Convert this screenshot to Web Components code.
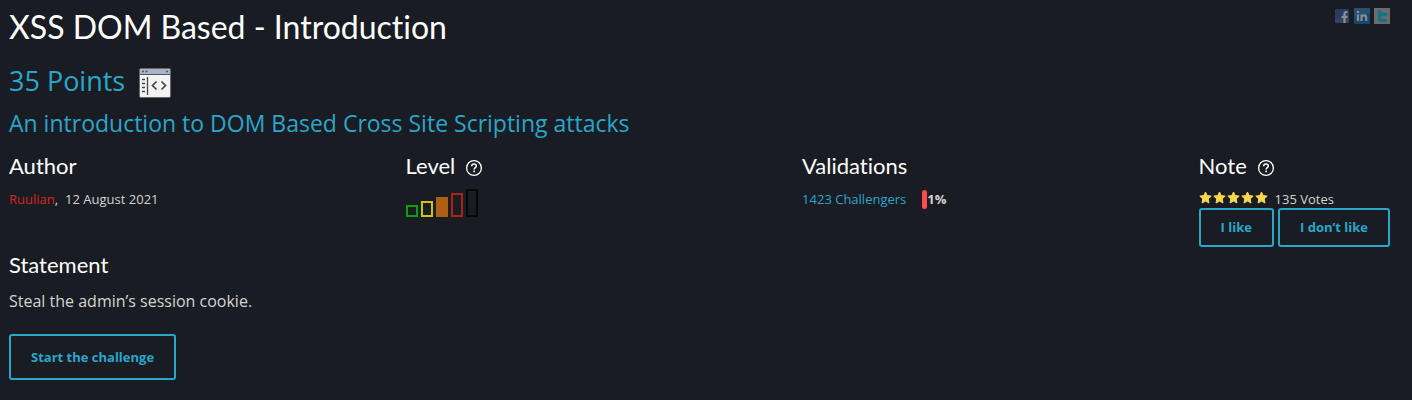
<!DOCTYPE html>
<html lang="en">
<head>
<meta charset="utf-8">
<title>XSS DOM Based - Introduction</title>
<style>
  body { margin: 0; background: #1a1c23; color: #d4d4d4; font-family: "Open Sans", "Noto Sans", sans-serif; font-size: 13px; line-height: 20px; }
</style>
</head>
<body>
<challenge-page></challenge-page>
<script>
const define = (name, html, setup) => customElements.define(name, class extends HTMLElement {
  constructor() {
    super();
    const t = document.createElement('template');
    t.innerHTML = html;
    this.attachShadow({ mode: 'open' }).append(t.content.cloneNode(true));
  }
  connectedCallback() { if (setup) setup(this); }
});

define('help-mark', `
<style>:host { display: inline-flex; padding-bottom: 3px; } svg { display: block; }</style>
<svg width="18" height="18" viewBox="0 0 18 18" fill="none" stroke="#fff" role="img" aria-label="Help">
  <circle cx="9" cy="9" r="7.4" stroke-width="1.3"/>
  <path d="M6.7 7.2C6.7 5.8 7.7 5 9 5s2.300.8 2.300 2c0 1.600-2.200 1.700-2.200 3.400" stroke-width="1.500"/>
  <path d="M9.100 11.500v1.700" stroke-width="1.600"/>
</svg>`);

define('code-window', `
<style>:host { display: inline-flex; } svg { display: block; }</style>
<svg width="32" height="30" viewBox="0 0 32 30" role="img" aria-label="Web - Client">
  <rect x=".5" y=".5" width="31" height="29" rx="1.500" fill="#f3f3f3" stroke="#656873"/>
  <path d="M1 1h30v5H1z" fill="#a9b4c8"/>
  <path d="M1 6.500h30" stroke="#535663"/>
  <path d="M3 3.500h2M6.500 3.500h2M27 3.500h2" stroke="#535663" stroke-width="1.400"/>
  <path d="M8.500 9v18" stroke="#454752" stroke-width="1.300"/>
  <path d="M3 11.500h3M3 15.500h3M3 19.500h3M3 23.500h3" stroke="#454752" stroke-width="1.300"/>
  <path d="M17.500 13.500l-4 4 4 4M22.500 13.500l4 4-4 4" fill="none" stroke="#454752" stroke-width="1.700"/>
</svg>`);

define('share-links', `
<style>
  :host { display: flex; gap: 4px; opacity: .5; }
  a { display: block; } svg { display: block; }
</style>
<a href="#facebook" aria-label="Facebook"><svg width="16" height="16" viewBox="0 0 16 16"><rect x="1" y="1" width="14" height="14" fill="#3e5ba0"/><path d="M1 11h14v4H1z" fill="#52699f"/><path d="M13.500 4h-1Q10.500 4 10.500 6v9M7.500 8.800h6" fill="none" stroke="#fff" stroke-width="2.200"/></svg></a>
<a href="#linkedin" aria-label="LinkedIn"><svg width="16" height="16" viewBox="0 0 16 16"><rect width="16" height="16" rx="1" fill="#1672b8"/><path d="M0 0h16v5L0 9z" fill="#3586c2"/><path d="M4 6.500V13M4 3v2M7.500 6.500V13M7.500 9q0-1.700 2.300-1.700T12.200 9.500V13" fill="none" stroke="#f4f8fb" stroke-width="2.200"/></svg></a>
<a href="#twitter" aria-label="Twitter"><svg width="16" height="16" viewBox="0 0 16 16"><rect width="16" height="16" fill="#b9babd"/><path d="M5.500 3.500v6q0 3 3 3H11.500M5.500 6.500H11.500" fill="none" stroke="#10cbe0" stroke-width="3.400" stroke-linecap="round"/></svg></a>`);

define('level-bars', `
<style>
  :host { display: flex; align-items: flex-end; gap: 3px; height: 28px; }
  i { box-sizing: border-box; width: 12px; border: 2px solid; }
</style>
<i style="height:12px;color:#0ca10c"></i><i style="height:16px;color:#cac60b"></i><i style="height:20px;color:#ae5f13;background:#ae5f13"></i><i style="height:24px;color:#a92416"></i><i style="height:28px;color:#07080a"></i>`);

define('star-rating', `
<style>:host { display: inline-flex; } svg { display: block; }</style>`, el => {
  for (let n = 0; n < 5; n++) el.shadowRoot.innerHTML += '<svg width="14" height="14" viewBox="0 0 14 14" aria-hidden="true"><path d="M6.500 1l1.700 3.600 4 .5-3 2.800.8 4.100-3.500-1.900L3 12l.8-4.100-3-2.800 4-.5z" fill="#f8d750" stroke="#f8d750" stroke-linejoin="round"/></svg>';
});

define('outline-button', `
<style>
  :host { display: block; }
  button { box-sizing: border-box; display: block; margin: 0; padding: 8px 20px; border: 2px solid #2ba6cb; border-radius: 3px; background: none; color: #2ba6cb; font: bold 13px/19px "Open Sans", sans-serif; white-space: nowrap; cursor: pointer; }
  :host([large]) button { padding: 12px 20px; line-height: 18px; }
</style>
<button type="button"><slot></slot></button>`);

define('section-title', `
<style>
  :host { display: block; }
  h2 { margin: 0; display: flex; align-items: flex-end; gap: 10px; color: #fff; font: 400 22px/28px Lato, sans-serif; font-variant-ligatures: none; }
</style>
<h2><slot></slot></h2>`);

define('info-column', `
<style>:host { display: block; } div { margin-top: 9px; }</style>
<slot name="title"></slot><div><slot></slot></div>`);

define('challenge-page', `
<style>
  :host { display: block; padding: 8px 22px 20px 9px; }
  a { color: #2ba6cb; text-decoration: none; }
  header { display: flex; justify-content: space-between; align-items: flex-start; }
  h1 { margin: 0; color: #fff; font: 400 32px/38px Lato, sans-serif; font-variant-ligatures: none; }
  .points { display: flex; align-items: flex-end; gap: 14px; margin-top: 14px; color: #2ba6cb; font-size: 27px; line-height: 42px; }
  code-window { padding-bottom: 4px; }
  .summary { margin: 4px 0 12px; color: #2ba6cb; font-size: 23px; line-height: 34px; }
  .facts { display: grid; grid-template-columns: repeat(3, 1fr) auto; }
  .row { display: flex; align-items: center; }
  .author { color: #d4281c; }
  .date { margin-left: 7px; }
  .meter { width: 5px; height: 19px; margin-left: 16px; border-radius: 3px; background: #ff4b4b; }
  .votes { gap: 6px; height: 19px; }
  star-rating { padding-bottom: 2px; }
  .buttons { display: flex; gap: 4px; }
  .statement { margin: 4px 0 21px; }
  .statement p { margin: 10px 0 0; font-size: 16px; line-height: 24px; }
</style>
<header><h1>XSS DOM Based - Introduction</h1><share-links></share-links></header>
<div class="points"><span>35 Points</span><code-window></code-window></div>
<div class="summary">An introduction to DOM Based Cross Site Scripting attacks</div>
<div class="facts">
  <info-column><section-title slot="title">Author</section-title><div class="row"><a class="author" href="#author">Ruulian</a>,<span class="date">12 August 2021</span></div></info-column>
  <info-column><section-title slot="title">Level<help-mark></help-mark></section-title><level-bars></level-bars></info-column>
  <info-column><section-title slot="title">Validations</section-title><div class="row"><a href="#challengers">1423 Challengers</a><span class="meter"></span><b>1%</b></div></info-column>
  <info-column><section-title slot="title">Note<help-mark></help-mark></section-title><div class="row votes"><star-rating></star-rating><span>135 Votes</span></div><div class="buttons"><outline-button>I like</outline-button><outline-button>I don’t like</outline-button></div></info-column>
</div>
<div class="statement"><section-title>Statement</section-title><p>Steal the admin’s session cookie.</p></div>
<outline-button large>Start the challenge</outline-button>
`);
</script>
</body>
</html>
